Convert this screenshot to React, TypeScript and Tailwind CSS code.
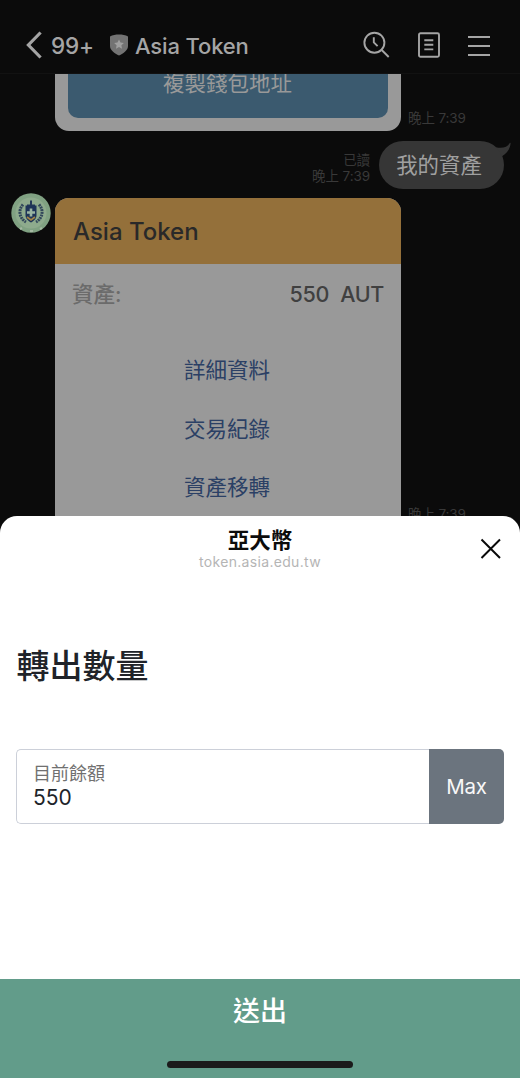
import type { ReactNode } from "react";

function SearchClockIcon() {
  return (
    <svg width="27" height="28" viewBox="0 0 27 28" fill="none" stroke="#a5a5a5" strokeWidth="1.9">
      <circle cx="11.4" cy="11.7" r="10" />
      <path d="M10.800 6.200v5.200l3.800 3.800M18.700 19l7 7" />
    </svg>
  );
}

function NoteIcon() {
  return (
    <svg width="22" height="26" viewBox="0 0 22 26" fill="none" stroke="#a5a5a5" strokeWidth="1.9">
      <rect x="1" y="1.2" width="20" height="23.6" rx="1.5" />
      <path d="M6.3 8.2h9M6.3 12.8h9M6.3 17.4h9" />
    </svg>
  );
}

function Header() {
  return (
    <header className="flex h-[74px] items-center border-b border-[#121212] pt-4 text-[#a5a5a5]">
      <svg className="ml-[25px]" width="17" height="28" viewBox="0 0 17 28" fill="none" stroke="currentColor" strokeWidth="3.2">
        <path d="M15.600 1.500 3.400 14 15.600 26.500" />
      </svg>
      <span className="mt-[2px] ml-[9px] w-[44px] text-[22.500px] leading-7 font-medium tracking-[-0.2px]">99+</span>
      <svg className="ml-[14px]" width="20" height="22" viewBox="0 0 20 22">
        <path d="M1 2.4C6-.1 14-.1 19 2.400V12c0 4.300-4.500 7.500-9 9.500C5.500 19.500 1 16.300 1 12Z" fill="#737373" />
        <path d="m10 5.400 1.500 3.100 3.400.4-2.500 2.400.6 3.400-3-1.700-3 1.700.6-3.400-2.500-2.400 3.400-.4Z" fill="#a0a0a0" />
      </svg>
      <h1 className="mt-[2px] ml-[6px] text-[22px] leading-7 font-medium tracking-[-0.15px]">Asia Token</h1>
      <div className="mr-[30px] ml-auto flex items-center">
        <SearchClockIcon />
        <span className="ml-[28px]"><NoteIcon /></span>
        <svg className="mt-[2px] ml-[28px]" width="22" height="23" viewBox="0 0 22 23" stroke="#a5a5a5" strokeWidth="2">
          <path d="M0 3h22M0 12h22M0 21h22" />
        </svg>
      </div>
    </header>
  );
}

function Time({ children }: { children: ReactNode }) {
  return <span className="block text-[13.5px] leading-4 tracking-[-0.1px] whitespace-nowrap text-[#393939]">{children}</span>;
}

function Avatar() {
  return (
    <svg className="-mt-[5px] ml-[10.500px] shrink-0" width="40" height="40" viewBox="0 0 40 40" fill="none">
      <circle cx="20" cy="20" r="19.700" fill="#80a182" />
      <circle cx="20" cy="20" r="15.500" fill="#8eab8d" />
      <path d="M12 11.500c-4.500 5-4.500 13 3 17.500M28 11.500c4.500 5 4.500 13-3 17.500" stroke="#32475b" strokeWidth="3" strokeDasharray="2 0.7" />
      <path d="M20 7.500v5M16 12.500h8" stroke="#233857" strokeWidth="2" />
      <path d="M14.500 12.500h11V22c0 4-3 6-5.500 7.500-2.500-1.500-5.500-3.500-5.500-7.500Z" fill="#1e3458" />
      <path d="M20 15.500v8M16 19.500h8" stroke="#99b4a2" strokeWidth="2.600" />
      <path d="m16 24 4 3 4-3" stroke="#a28347" strokeWidth="1.700" />
      <path d="m9 36 2-1M19 38h3M29 36l2-1" stroke="#a5b8a2" strokeWidth="2" />
    </svg>
  );
}

function Chat() {
  return (
    <main className="h-[441.500px] overflow-hidden">
      <div className="flex items-end pl-[55px]">
        <div className="h-[57px] w-[346px] rounded-b-[14px] bg-[#999999] px-[13px]">
          <div className="h-[44px] overflow-hidden rounded-b-[10px] bg-[#3b5a6f] pr-px text-center text-[21.5px] leading-[18px] text-[#999999]">
            複製錢包地址
          </div>
        </div>
        <div className="mb-[5px] ml-[7px]"><Time>晚上 7:39</Time></div>
      </div>
      <div className="mt-[10px] flex h-12 justify-end pr-4">
        <div className="mt-[11px] mr-[9px] text-right">
          <Time>已讀</Time>
          <Time>晚上 7:39</Time>
        </div>
        <div className="relative h-12 w-[125px] rounded-full bg-[#363636] pr-[5px] text-center text-[21.4px] leading-[48px] text-[#a0a0a0]">
          我的資產
          <svg className="absolute top-0 right-[-7px]" width="22" height="20" viewBox="0 0 22 20">
            <path d="M7 6.200C13 8 18.500 6 20.600 2.200c.5-.8 1.100-.5 1 .4C21 8 18 12.500 13 15.300Z" fill="#363636" />
          </svg>
        </div>
      </div>
      <div className="mt-[9px] flex">
        <Avatar />
        <section className="ml-[4.500px] h-[318px] w-[346px] shrink-0 overflow-hidden rounded-t-[14px] bg-[#999999]">
          <h2 className="h-[66px] bg-[#94703a] pl-[18px] text-[24px] leading-[67px] font-medium text-[#292929]">Asia Token</h2>
          <div className="flex h-[60px] items-center justify-between pr-[17px] pl-[17px] text-[21.5px] font-medium">
            <span className="text-[#6b6b6b]">資產:</span>
            <span className="flex gap-[11px] tracking-[-0.3px] text-[#404040]">
              <span>550</span>
              <span>AUT</span>
            </span>
          </div>
          <nav className="mt-[17px] flex flex-col pr-[2px] text-center text-[21.5px] leading-[58.500px] text-[#2b4065]">
            <span>詳細資料</span>
            <span>交易紀錄</span>
            <span>資產移轉</span>
          </nav>
        </section>
        <div className="mt-[307.500px] ml-[7px]"><Time>晚上 7:39</Time></div>
      </div>
    </main>
  );
}

function TransferSheet() {
  return (
    <section className="flex h-[562.500px] flex-col overflow-hidden rounded-t-[17px] bg-white">
      <div className="grid h-[64px] grid-cols-[64px_1fr_64px]">
        <div className="col-start-2 pt-[10px] text-center">
          <h2 className="text-[21.5px] leading-7 font-bold text-[#0c0c0c]">亞大幣</h2>
          <p className="text-[14px] leading-4 tracking-[0.32px] text-[#b5b5b5]">token.asia.edu.tw</p>
        </div>
        <svg className="mt-[22.500px] ml-[24px]" width="22" height="22" viewBox="0 0 22 22" stroke="#090909" strokeWidth="2">
          <path d="m1.500 1.500 18.500 18.500M20 1.500 1.500 20" />
        </svg>
      </div>
      <h1 className="mt-[62px] pl-[16.500px] text-[33px] leading-[48px] font-medium text-[#202329]">轉出數量</h1>
      <div className="mx-4 mt-[59px] flex h-[75px]">
        <label className="flex flex-1 flex-col rounded-l-[5px] border border-r-0 border-[#ccd0d9] pt-[12.500px] pl-4">
          <span className="text-[18px] leading-6 text-[#707070]">目前餘額</span>
          <span className="text-[21px] leading-6 text-[#202329]">550</span>
        </label>
        <button className="w-[75px] rounded-r-[5px] bg-[#6b747e] pt-[2px] text-[20.500px] tracking-[-0.2px] text-[#f8f8f8]">Max</button>
      </div>
      <button className="mt-auto flex h-[99px] flex-col items-center bg-[#629c8a] pt-[13px] text-white">
        <span className="text-[27px] leading-10 font-medium">送出</span>
        <span className="mt-[29px] h-[6.500px] w-[186px] rounded-full bg-[#1b1b1b]" />
      </button>
    </section>
  );
}

export default function App() {
  return (
    <div className="h-[1078px] w-[520px] overflow-hidden bg-[#0b0b0b] font-['Inter','Noto_Sans_CJK_TC',sans-serif]">
      <Header />
      <Chat />
      <TransferSheet />
    </div>
  );
}
